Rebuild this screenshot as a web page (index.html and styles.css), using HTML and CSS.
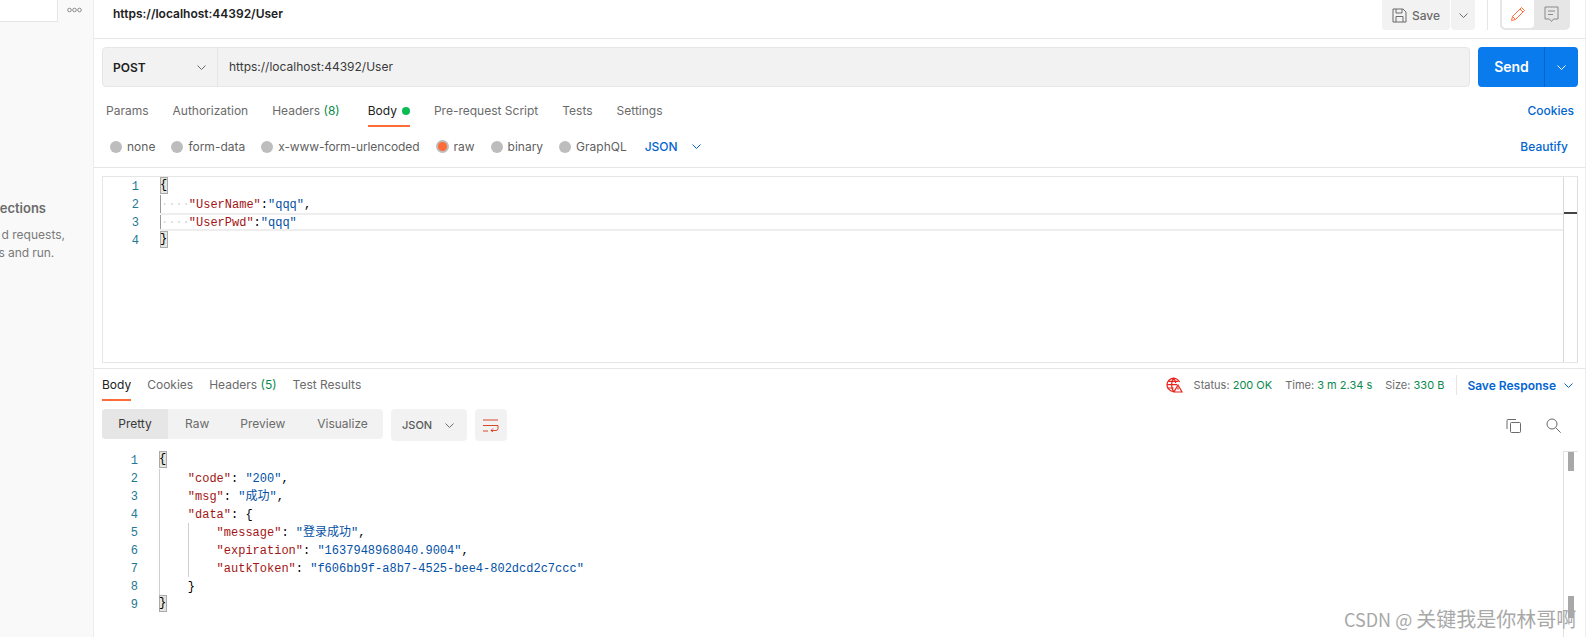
FILE: index.html
```html
<!DOCTYPE html>
<html lang="en">
<head>
<meta charset="utf-8">
<title>Postman</title>
<link rel="stylesheet" href="styles.css">
</head>
<body>
<div class="app">
  <aside class="sidebar">
    <div class="side-top">
      <div class="side-search"></div>
      <svg class="side-more" width="15" height="6" viewBox="0 0 15 6"><circle cx="2.5" cy="3" r="1.8"/><circle cx="7.5" cy="3" r="1.8"/><circle cx="12.5" cy="3" r="1.8"/></svg>
    </div>
    <div class="side-empty">
      <div class="side-title">ections</div>
      <div class="side-line l1">d requests,</div>
      <div class="side-line l2">s and run.</div>
    </div>
  </aside>
  <main class="main">
    <header class="top">
      <div class="req-name">https://localhost:44392/User</div>
      <div class="top-actions">
        <div class="save">
          <svg width="15" height="15" viewBox="0 0 15 15" fill="none" stroke="#6b6b6b"><path d="M1 1h10l3 3v10H1z"/><path d="M4 1v4h6V1M4 14V8.5h7V14"/></svg>
          <span>Save</span>
        </div>
        <div class="save-more"><svg class="chev" width="9" height="5" viewBox="0 0 9 5"><path d="M.5.5l4 4 4-4"/></svg></div>
        <div class="top-div"></div>
        <div class="toggle">
          <div class="toggle-on">
            <svg width="16" height="16" viewBox="0 0 16 16" fill="none" stroke="#ff6c37"><path d="M1.5 14.5l1-4L11.5 1.5l3 3-9 9z"/><path d="M10 3l3 3M2.5 10.5l3 3"/></svg>
          </div>
          <div class="toggle-off">
            <svg width="15" height="17" viewBox="0 0 15 17" fill="none" stroke="#8a8a8a"><path d="M1 1h13v12H9.5L7.5 15.5 5.5 13H1z"/><path d="M4 5h7M4 8.5h5"/></svg>
          </div>
        </div>
      </div>
    </header>

    <div class="url-row">
      <div class="url-box">
        <div class="method"><span>POST</span><svg class="chev" width="9" height="5" viewBox="0 0 9 5"><path d="M.5.5l4 4 4-4"/></svg></div>
        <div class="url">https://localhost:44392/User</div>
      </div>
      <div class="send">
        <div class="send-label">Send</div>
        <div class="send-more"><svg class="chev white" width="9" height="5" viewBox="0 0 9 5"><path d="M.5.5l4 4 4-4"/></svg></div>
      </div>
    </div>

    <nav class="req-tabs">
      <span class="tab">Params</span>
      <span class="tab">Authorization</span>
      <span class="tab t3">Headers <em>(8)</em></span>
      <span class="tab active">Body<i class="dot"></i></span>
      <span class="tab">Pre-request Script</span>
      <span class="tab">Tests</span>
      <span class="tab">Settings</span>
      <a class="link push">Cookies</a>
    </nav>

    <div class="body-opts">
      <label class="opt"><i class="radio"></i>none</label>
      <label class="opt"><i class="radio"></i>form-data</label>
      <label class="opt tight"><i class="radio"></i>x-www-form-urlencoded</label>
      <label class="opt"><i class="radio on"></i>raw</label>
      <label class="opt"><i class="radio"></i>binary</label>
      <label class="opt last"><i class="radio"></i>GraphQL</label>
      <span class="lang">JSON<svg class="chev blue" width="9" height="5" viewBox="0 0 9 5"><path d="M.5.5l4 4 4-4"/></svg></span>
      <a class="link beautify">Beautify</a>
    </div>

    <section class="editor">
      <div class="line"><span class="ln">1</span><span class="code"><b class="match">{</b></span></div>
      <div class="line"><span class="ln">2</span><span class="code"><span class="g ws">····</span><span class="k">"UserName"</span>:<span class="s">"qqq"</span>,</span></div>
      <div class="line cur"><span class="ln">3</span><span class="code"><span class="g ws">····</span><span class="k">"UserPwd"</span>:<span class="s">"qqq"</span></span></div>
      <div class="line"><span class="ln">4</span><span class="code"><b class="match">}</b></span></div>
      <div class="ruler"><i class="cursor"></i></div>
    </section>

    <div class="res-head">
      <span class="rtab active">Body</span>
      <span class="rtab">Cookies</span>
      <span class="rtab">Headers <em>(5)</em></span>
      <span class="rtab">Test Results</span>
      <div class="res-meta">
        <svg class="globe" width="17" height="16" viewBox="0 0 17 16" fill="none" stroke="#e8221d" stroke-width="1.2"><path d="M9 14.3A6.6 6.6 0 1 1 13.6 5"/><path d="M1 7.7h10M1.6 11h6M2.2 4.3h10M7.5 1.2C5 4.5 5 11 7.5 14.3M7.5 1.2c1.2 1.4 1.9 3 2.3 4.8"/><path d="M12 8l4 7H8z" fill="#fff"/><path d="M12 10.5v2"/></svg>
        <span class="m1">Status: <em>200 OK</em></span>
        <span class="m2">Time: <em>3 m 2.34 s</em></span>
        <span class="m3">Size: <em>330 B</em></span>
        <i class="meta-div"></i>
        <a class="link save-res">Save Response</a>
        <svg class="chev blue" width="9" height="5" viewBox="0 0 9 5"><path d="M.5.5l4 4 4-4"/></svg>
      </div>
    </div>

    <div class="res-tools">
      <div class="seg">
        <span class="seg-item on">Pretty</span>
        <span class="seg-item raw">Raw</span>
        <span class="seg-item prev">Preview</span>
        <span class="seg-item vis">Visualize</span>
      </div>
      <div class="fmt"><span>JSON</span><svg class="chev" width="9" height="5" viewBox="0 0 9 5"><path d="M.5.5l4 4 4-4"/></svg></div>
      <div class="wrap-btn">
        <svg width="16" height="13" viewBox="0 0 16 13" fill="none" stroke="#d9482b"><path d="M0 1h15M0 6.5h15M0 12h5"/><path d="M15 6.5v3a2 2 0 0 1-2 2H8M10 9.5l-2 2 2 1.5"/></svg>
      </div>
      <div class="tool-icons">
        <svg width="15" height="15" viewBox="0 0 15 15" fill="none" stroke="#6b6b6b"><rect x="4.5" y="4.5" width="10" height="10" rx="1"/><path d="M10 1.5H2a1 1 0 0 0-1 1V11"/></svg>
        <svg width="15" height="15" viewBox="0 0 15 15" fill="none" stroke="#6b6b6b"><circle cx="6" cy="6" r="5"/><path d="M9.7 9.7l5 5"/></svg>
      </div>
    </div>

    <section class="response">
      <div class="line"><span class="ln">1</span><span class="code"><b class="match">{</b></span></div>
      <div class="line"><span class="ln">2</span><span class="code"><span class="g"></span><span class="k">"code"</span>: <span class="s">"200"</span>,</span></div>
      <div class="line"><span class="ln">3</span><span class="code"><span class="g"></span><span class="k">"msg"</span>: <span class="s">"成功"</span>,</span></div>
      <div class="line"><span class="ln">4</span><span class="code"><span class="g"></span><span class="k">"data"</span>: {</span></div>
      <div class="line"><span class="ln">5</span><span class="code"><span class="g"></span><span class="g"></span><span class="k">"message"</span>: <span class="s">"登录成功"</span>,</span></div>
      <div class="line"><span class="ln">6</span><span class="code"><span class="g"></span><span class="g"></span><span class="k">"expiration"</span>: <span class="s">"1637948968040.9004"</span>,</span></div>
      <div class="line"><span class="ln">7</span><span class="code"><span class="g"></span><span class="g"></span><span class="k">"autkToken"</span>: <span class="s">"f606bb9f-a8b7-4525-bee4-802dcd2c7ccc"</span></span></div>
      <div class="line"><span class="ln">8</span><span class="code"><span class="g"></span>}</span></div>
      <div class="line"><span class="ln">9</span><span class="code"><b class="match">}</b></span></div>
      <div class="res-ruler"><i class="thumb a"></i><i class="thumb b"></i></div>
    </section>
  </main>
</div>
<div class="watermark"><span class="wm-latin">CSDN @</span>关键我是你林哥啊</div>
</body>
</html>
```

FILE: styles.css
```css
* { box-sizing: border-box; }
html, body { margin: 0; height: 637px; overflow: hidden; background: #fff; }
body { font-family: Inter, "Noto Sans CJK SC", sans-serif; font-size: 12px; color: #6b6b6b; position: relative; }
em { font-style: normal; }
i { font-style: normal; display: block; }

.app { display: flex; height: 637px; }

/* sidebar */
.sidebar { width: 94px; flex: none; background: #f9f9f9; border-right: 1px solid #ededed; overflow: hidden; }
.side-top { display: flex; align-items: flex-start; height: 24px; }
.side-search { width: 58px; height: 22px; background: #fff; border: 1px solid #e6e6e6; border-width: 0 1px 1px 0; }
.side-more { margin: 7px 0 0 9px; }
.side-more circle { fill: none; stroke: #8c8c8c; }
.side-empty { display: flex; flex-direction: column; align-items: flex-end; padding-top: 174px; padding-right: 47px; }
.side-title { font-size: 13px; font-weight: 600; line-height: 20px; color: #6b6b6b; margin-bottom: 8px; }
.side-line { line-height: 18px; white-space: nowrap; color: #7a7a7a; }
.l1 { margin-right: -19px; }
.l2 { margin-right: -8px; letter-spacing: -0.1px; }

/* main */
.main { flex: none; width: 1492px; border-right: 1px solid #ededed; }
.top { height: 39px; border-bottom: 1px solid #e6e6e6; display: flex; justify-content: space-between; padding-left: 19px; }
.req-name { font-weight: 600; color: #212121; line-height: 28px; }
.top-actions { display: flex; padding-right: 15px; }
.save { width: 68px; height: 30px; background: #f2f2f2; border-radius: 0 0 4px 4px; display: flex; align-items: center; justify-content: center; gap: 5px; font-weight: 500; color: #6b6b6b; }
.save-more { width: 24px; height: 30px; margin-left: 1px; background: #f2f2f2; border-radius: 0 0 4px 4px; display: flex; align-items: center; justify-content: center; }
.top-div { width: 1px; height: 30px; background: #e6e6e6; margin: 0 12px; }
.toggle { width: 70px; height: 30px; background: #e6e6e6; border-radius: 0 0 5px 5px; display: flex; padding: 0 2px 2px; }
.toggle-on { width: 32px; background: #fff; border-radius: 0 0 4px 4px; display: flex; align-items: center; justify-content: center; }
.toggle-off { flex: 1; display: flex; align-items: center; justify-content: center; padding-top: 1px; }

.chev { fill: none; stroke: #6b6b6b; flex: none; }
.chev.white { stroke: #fff; }
.chev.blue { stroke: #0265d2; }

.url-row { display: flex; padding: 8px 7px 0 8px; gap: 8px; }
.url-box { flex: 1; height: 40px; display: flex; background: #f2f2f2; border: 1px solid #e6e6e6; border-radius: 4px; }
.method { width: 115px; border-right: 1px solid #e6e6e6; display: flex; align-items: center; justify-content: space-between; padding: 0 11px 0 10px; font-weight: 600; color: #212121; }
.url { line-height: 38px; padding-left: 11px; color: #3a3a3a; }
.send { width: 100px; height: 40px; background: #097bed; border-radius: 4px; display: flex; color: #fff; }
.send-label { width: 67px; text-align: center; font-size: 14px; font-weight: 600; line-height: 39px; padding-left: 1px; border-right: 1px solid #0265d2; }
.send-more { flex: 1; display: flex; align-items: center; justify-content: center; }

.req-tabs { display: flex; align-items: flex-start; height: 41px; padding: 0 11px 0 12px; margin-top: 3px; }
.tab { line-height: 41px; height: 41px; white-space: nowrap; margin-right: 24px; }
.t3 { margin-right: 28px; }
.tab em, .rtab em { color: #0a8a4a; }
.tab.active { color: #212121; height: 37px; border-bottom: 2px solid #ff6c37; }
.dot { display: inline-block; width: 8px; height: 8px; border-radius: 50%; background: #0cbb52; margin-left: 5px; }
.link { color: #0265d2; font-weight: 500; white-space: nowrap; }
.push { margin-left: auto; line-height: 41px; }

.body-opts { display: flex; align-items: center; height: 37px; border-bottom: 1px solid #e6e6e6; padding: 0 17px 5px 16px; }
.opt { display: flex; align-items: center; gap: 5px; margin-right: 16px; color: #5f5f5f; }
.tight { letter-spacing: -0.1px; margin-right: 17px; }
.last { margin-right: 18px; }
.radio { width: 12px; height: 12px; border-radius: 50%; background: #bdbdbd; }
.radio.on { background: #ff6c37; box-shadow: 0 0 0 2px #bdbdbd; width: 9px; height: 9px; margin: 0 1.5px; }
.lang { display: flex; align-items: center; gap: 14px; font-weight: 500; color: #0265d2; }
.beautify { margin-left: auto; }

/* code */
.editor, .response { font-family: "Liberation Mono", "Noto Sans CJK SC", monospace; font-size: 12px; color: #000; position: relative; }
.editor { margin: 8px 7px 0 8px; height: 187px; border: 1px solid #e6e6e6; border-right-color: #ddd; }
.line { display: flex; height: 18px; line-height: 20px; white-space: pre; }
.ln { width: 36px; flex: none; text-align: right; color: #237893; }
.code { margin-left: 21px; flex: 1; display: flex; }
.cur .code { border: solid #eee; border-width: 2px 0; line-height: 16px; }
.g { width: 28.8px; flex: none; height: 18px; border-left: 1px solid #cfcfcf; }
.cur .g { height: 14px; }
.g.ws { color: #d6d6d6; border-left-color: #999; }
.k { color: #a31515; }
.s { color: #0451a5; }
.match { font-weight: normal; display: block; width: 7.5px; height: 17px; line-height: 17px; background: #e4e6df; box-shadow: inset 0 0 0 1px #aaa; }
.ruler { position: absolute; top: 0; right: 0; bottom: 0; width: 14px; border-left: 1px solid #d9d9d9; background: #fff; }
.cursor { position: absolute; left: 0; right: 0; top: 35px; height: 2px; background: #444; }

.res-head { margin-top: 5px; border-top: 1px solid #e6e6e6; height: 41px; display: flex; align-items: flex-start; padding-left: 8px; gap: 16px; }
.rtab { line-height: 32px; height: 32px; white-space: nowrap; }
.rtab.active { color: #212121; border-bottom: 2px solid #ff6c37; }
.res-meta { margin-left: auto; display: flex; align-items: center; height: 32px; padding-right: 12px; font-size: 11px; }
.res-meta em { color: #0a8a4a; }
.globe { margin-right: 11px; }
.m1, .m2 { margin-right: 13px; }
.meta-div { width: 1px; height: 20px; background: #e6e6e6; margin: 0 10px 0 12px; }
.save-res { margin-right: 8px; font-size: 12px; font-weight: 600; }

.res-tools { display: flex; padding-left: 8px; height: 42px; align-items: flex-start; }
.seg { width: 281px; height: 30px; background: #f2f2f2; border-radius: 4px; display: flex; line-height: 30px; overflow: hidden; }
.seg-item.on { width: 66px; background: #e6e6e6; color: #3a3a3a; text-align: center; }
.raw { margin-left: 17px; }
.prev { margin-left: 31px; }
.vis { margin-left: 32px; }
.fmt { width: 76px; height: 32px; background: #f2f2f2; border-radius: 4px; margin-left: 8px; display: flex; align-items: center; justify-content: space-between; padding: 0 13px 0 11px; font-weight: 500; font-size: 11px; color: #5a5a5a; }
.wrap-btn { width: 32px; height: 32px; background: #f2f2f2; border-radius: 4px; margin-left: 8px; display: flex; align-items: center; justify-content: center; }
.tool-icons { margin-left: auto; display: flex; gap: 25px; padding: 9px 24px 0 0; }

.response { height: 186px; padding-left: 8px; }
.res-ruler { position: absolute; top: 0; bottom: 0; right: 7px; width: 15px; border: solid #e0e0e0; border-width: 1px 0 0 1px; background: #fff; }
.thumb { position: absolute; left: 4px; width: 6px; background: #a8a8a8; }
.thumb.a { top: 0; height: 19px; }
.thumb.b { top: 144px; height: 22px; }

.watermark { position: absolute; left: 1344px; top: 606px; font-family: "Noto Sans CJK SC", sans-serif; font-size: 20px; line-height: 26px; color: #a8a8a8; white-space: nowrap; }
.wm-latin { font-size: 18px; margin-right: 4px; }
```
